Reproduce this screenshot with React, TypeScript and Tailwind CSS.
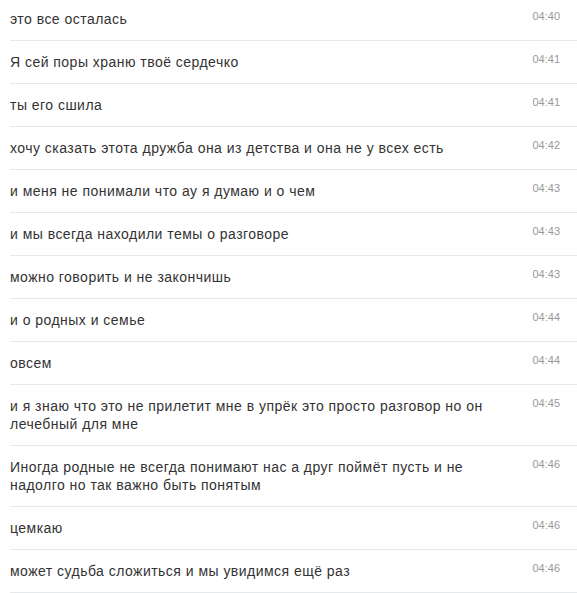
const messages = [
  { text: "это все осталась", time: "04:40" },
  { text: "Я сей поры храню твоё сердечко", time: "04:41" },
  { text: "ты его сшила", time: "04:41" },
  { text: "хочу сказать этота дружба она из детства и она не у всех есть", time: "04:42" },
  { text: "и меня не понимали что ау я думаю и о чем", time: "04:43" },
  { text: "и мы всегда находили темы о разговоре", time: "04:43" },
  { text: "можно говорить и не закончишь", time: "04:43" },
  { text: "и о родных и семье", time: "04:44" },
  { text: "овсем", time: "04:44" },
  {
    text: "и я знаю что это не прилетит мне в упрёк это просто разговор но он лечебный для мне",
    time: "04:45",
  },
  {
    text: "Иногда родные не всегда понимают нас а друг поймёт пусть и не надолго но так важно быть понятым",
    time: "04:46",
  },
  { text: "цемкаю", time: "04:46" },
  { text: "может судьба сложиться и мы увидимся ещё раз", time: "04:46" },
];

export default function App() {
  return (
    <div className="w-[577px] h-[593px] overflow-hidden bg-white font-['Liberation_Sans',Arial,sans-serif]">
      {messages.map((m, i) => (
        <div
          key={i}
          className={`ml-[10px] flex items-start border-b border-[#e7e8ec] pb-[12px] ${i === 0 ? "pt-[10px]" : "pt-[12px]"}`}
        >
          <div className="flex-1 min-w-0 text-[14px] leading-[18px] tracking-[0.47px] text-[#333]">
            {m.text}
          </div>
          <div className="shrink-0 ml-[22px] mr-[17px] text-[11px] leading-[13px] text-[#999]">
            {m.time}
          </div>
        </div>
      ))}
    </div>
  );
}
